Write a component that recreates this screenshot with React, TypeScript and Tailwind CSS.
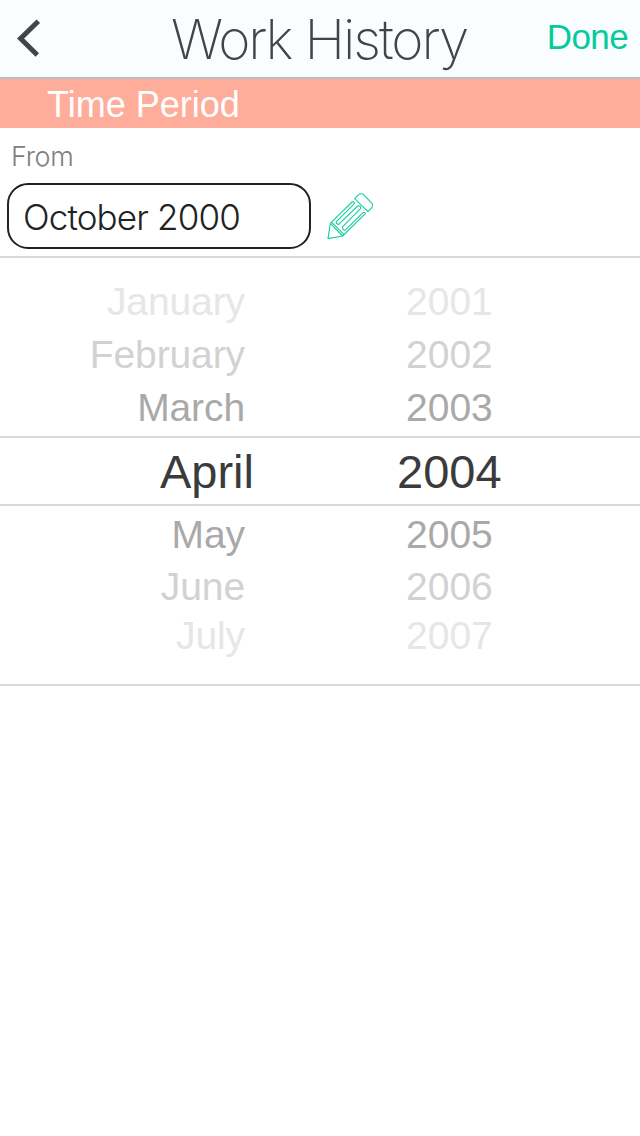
const sans = "font-['Liberation_Sans',Arial,sans-serif]";
const light = "font-['Inter',sans-serif]";

const rows = [
  { month: 'January', year: '2001', style: 'h-[53px] leading-[53px] text-[#e6e6e6]' },
  { month: 'February', year: '2002', style: 'h-[53px] leading-[53px] text-[#d2d2d2]' },
  { month: 'March', year: '2003', style: 'h-[53px] leading-[53px] text-[#a9a9a9]' },
];

const laterRows = [
  { month: 'May', year: '2005', style: 'h-[53px] leading-[53px] text-[#a9a9a9]' },
  { month: 'June', year: '2006', style: 'h-[51px] leading-[51px] text-[#d2d2d2]' },
  { month: 'July', year: '2007', style: 'h-[47px] leading-[47px] text-[#e6e6e6]' },
];

function PickerRow({ month, year, style }: { month: string; year: string; style: string }) {
  return (
    <div className={`flex text-[39px] ${style}`}>
      <span className="w-[245px] text-right tracking-[-0.1px]">{month}</span>
      <span className="ml-[161px]">{year}</span>
    </div>
  );
}

function Pencil() {
  return (
    <svg className="mt-[7px] ml-[14px] size-[50px]" viewBox="45 30 150 150" fill="none" stroke="#19cfa0" strokeWidth="3.4" strokeLinejoin="round">
      <path d="M134 56L146 44Q152 39 160 43L186 70Q190 76 186 82L174 95Z" />
      <path d="M54 176L61 130L98 168Z" />
      <path d="M65 127L102 164" />
      <path d="M61 130L126 66Q131 62 134 70L79 125Q78 133 86 133L143 78Q152 76 152 85L98 140Q96 150 105 151L159 98Q166 95 166 101L98 168" />
    </svg>
  );
}

export default function App() {
  return (
    <main className={`flex h-[1136px] w-[640px] flex-col overflow-hidden bg-white ${sans}`}>
      <header className="flex h-[79px] shrink-0 border-b-2 border-[#b9bec1] bg-[#f9fdff]">
        <button className="flex w-[171px] pt-[18px] pl-[16px]" aria-label="Back">
          <svg className="h-[42px] w-[26px]" viewBox="0 0 26 42" fill="none" stroke="#444444" strokeWidth="5">
            <path d="M22.3 3.2L4.6 20.5L21.3 37" />
          </svg>
        </button>
        <h1 className={`w-[330px] whitespace-nowrap text-[55px] leading-[78px] font-extralight tracking-[-2.1px] text-[#444444] ${light}`}>Work History</h1>
        <button className="ml-auto pr-[12px] text-[35px] leading-[73px] tracking-[-0.6px] text-[#05cb9b]"><span className="block h-[77px]">Done</span></button>
      </header>
      <h2 className="h-[49px] shrink-0 bg-[#ffad9b] pl-[47px] text-[36px] leading-[52px] text-white">Time Period</h2>
      <section className="h-[130px] shrink-0 border-b-2 border-[#d9d9d9]">
        <p className={`h-[55px] pl-[11px] text-[27px] leading-[57px] font-light tracking-[-0.3px] text-[#808080] ${light}`}>From</p>
        <div className="flex pl-[7px]">
          <div className={`h-[66px] w-[304px] rounded-[21px] border-2 border-[#222222] pl-[14px] text-[35px] leading-[64px] font-light tracking-[-0.85px] whitespace-nowrap text-[#222222] ${light}`}>October 2000</div>
          <Pencil />
        </div>
      </section>
      <section className="flex h-[428px] shrink-0 flex-col border-b-2 border-[#d9d9d9]">
        <div className="h-[178px] pt-[17px]">
          {rows.map((r) => <PickerRow key={r.month} {...r} />)}
        </div>
        <div className="flex h-[70px] border-y-2 border-[#d9d9d9] pt-px text-[47px] leading-[66px] text-[#3b3b3b]">
          <span className="w-[254px] text-right">April</span>
          <span className="ml-[143px]">2004</span>
        </div>
        <div className="pt-[2px]">
          {laterRows.map((r) => <PickerRow key={r.month} {...r} />)}
        </div>
      </section>
    </main>
  );
}
